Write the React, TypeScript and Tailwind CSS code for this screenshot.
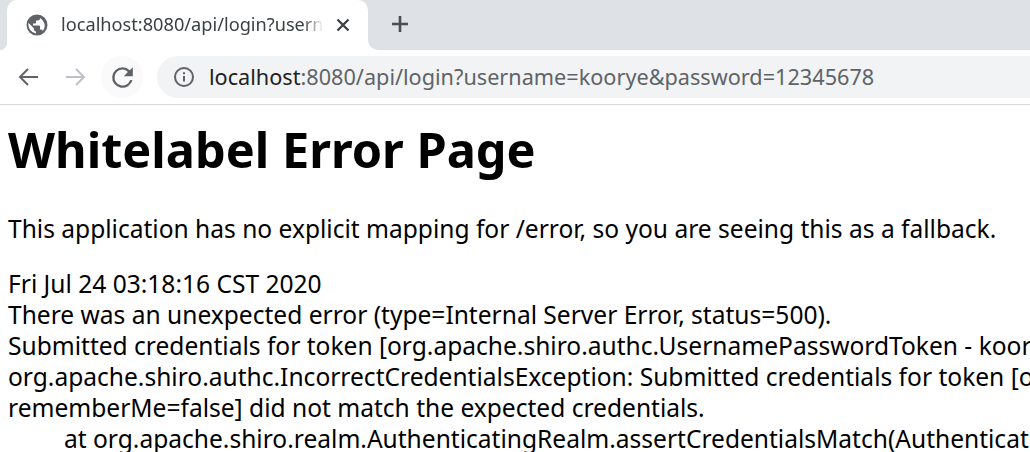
const font = { fontFamily: '"Noto Sans", "Noto Sans CJK SC", sans-serif' };

function Globe() {
  return (
    <svg width="24" height="24" viewBox="0 0 24 24" fill="#5f6368">
      <path d="M12 1.500a10.500 10.500 0 1 0 0 21 10.500 10.500 0 0 0 0-21Zm-1 18.900A8.500 8.500 0 0 1 3.600 10l5.400 5.400v1c0 1.100.9 2 2 2v2Zm6.900-2.500a2 2 0 0 0-1.900-1.400h-1v-3c0-.6-.4-1-1-1H8v-2h2c.6 0 1-.4 1-1V7.500h2c1.100 0 2-.9 2-2v-.4a8.500 8.500 0 0 1 2.900 12.800Z" />
    </svg>
  );
}

export default function App() {
  return (
    <div className="w-[1030px] h-[452px] overflow-hidden bg-white flex flex-col" style={font}>
      <div className="h-[50px] shrink-0 flex">
        <div className="w-[7px] bg-[#dee1e6] rounded-br-[10px]" />
        <div className="w-[361px] bg-[#dee1e6]">
          <div className="h-[50px] bg-white rounded-t-[10px] flex items-center pl-[18px] pb-[1px]">
            <Globe />
            <div className="w-[263px] ml-[12px] overflow-hidden whitespace-nowrap text-[18.200px] text-[#3c4043] [mask-image:linear-gradient(to_right,black_92%,transparent)]">
              localhost:8080/api/login?username=koorye
            </div>
            <svg className="ml-[12px]" width="14" height="14" viewBox="0 0 14 14" stroke="#3c4043" strokeWidth="2.300">
              <path d="M1.500 1.500 12.500 12.500M12.500 1.500 1.500 12.500" />
            </svg>
          </div>
        </div>
        <div className="flex-1 bg-[#dee1e6] rounded-bl-[10px] pl-[22px] pt-[14px]">
          <svg width="20" height="20" viewBox="0 0 20 20" stroke="#4a4d51" strokeWidth="2.600">
            <path d="M10 2V18M2 10H18" />
          </svg>
        </div>
      </div>
      <div className="h-[55px] shrink-0 bg-white border-b border-[#d9dadc] flex items-center pl-[17px]">
        <svg width="22" height="20" viewBox="0 0 22 20" fill="none" stroke="#5f6368" strokeWidth="2">
          <path d="M21 10H3M11 2 3 10l8 8" />
        </svg>
        <svg className="ml-[26px]" width="22" height="20" viewBox="0 0 22 20" fill="none" stroke="#bdc1c6" strokeWidth="2">
          <path d="M1 10H19M11 2l8 8-8 8" />
        </svg>
        <div className="ml-[14px] w-[42px] h-[42px] rounded-full bg-[#fafafa] flex items-center justify-center">
          <svg width="31" height="31" viewBox="0 0 24 24" fill="#5f6368">
            <path d="M17.650 6.350A7.960 7.960 0 0 0 12 4a8 8 0 1 0 7.740 10h-1.800A6.200 6.200 0 1 1 12 5.800c1.700 0 3.100.7 4.200 2L13 11h7V4l-2.350 2.350Z" />
          </svg>
        </div>
        <div className="ml-[14px] flex-1 h-[42px] rounded-l-full bg-[#f1f3f4] flex items-center pl-[17px]">
          <svg width="20" height="20" viewBox="0 0 20 20" fill="none" stroke="#5f6368" strokeWidth="2">
            <circle cx="10" cy="10" r="9" />
            <path d="M10 9v5.500" />
            <path d="M10 5.200v2" />
          </svg>
          <div className="ml-[15px] whitespace-nowrap text-[21.660px] text-[#5f6368]">
            <span className="text-[#202124]">localhost</span>:8080/api/login?username=koorye&amp;password=12345678
          </div>
        </div>
      </div>
      <div className="pl-[8px] text-black whitespace-nowrap">
        <h1 className="text-[48.650px] font-bold leading-[64px] mt-[12px]">Whitelabel Error Page</h1>
        <p className="text-[24.550px] leading-[31px] mt-[32px]">This application has no explicit mapping for /error, so you are seeing this as a fallback.</p>
        <div className="text-[24.550px] leading-[31px] mt-[24px]">
          <div>Fri Jul 24 03:18:16 CST 2020</div>
          <div>There was an unexpected error (type=Internal Server Error, status=500).</div>
          <div>Submitted credentials for token [org.apache.shiro.authc.UsernamePasswordToken - koorye, rememberMe=false]</div>
          <div>org.apache.shiro.authc.IncorrectCredentialsException: Submitted credentials for token [org.apache.shiro.authc.UsernamePasswordToken - koorye,</div>
          <div>rememberMe=false] did not match the expected credentials.</div>
          <div className="pl-[56px]">at org.apache.shiro.realm.AuthenticatingRealm.assertCredentialsMatch(AuthenticatingRealm.java:600)</div>
        </div>
      </div>
    </div>
  );
}
